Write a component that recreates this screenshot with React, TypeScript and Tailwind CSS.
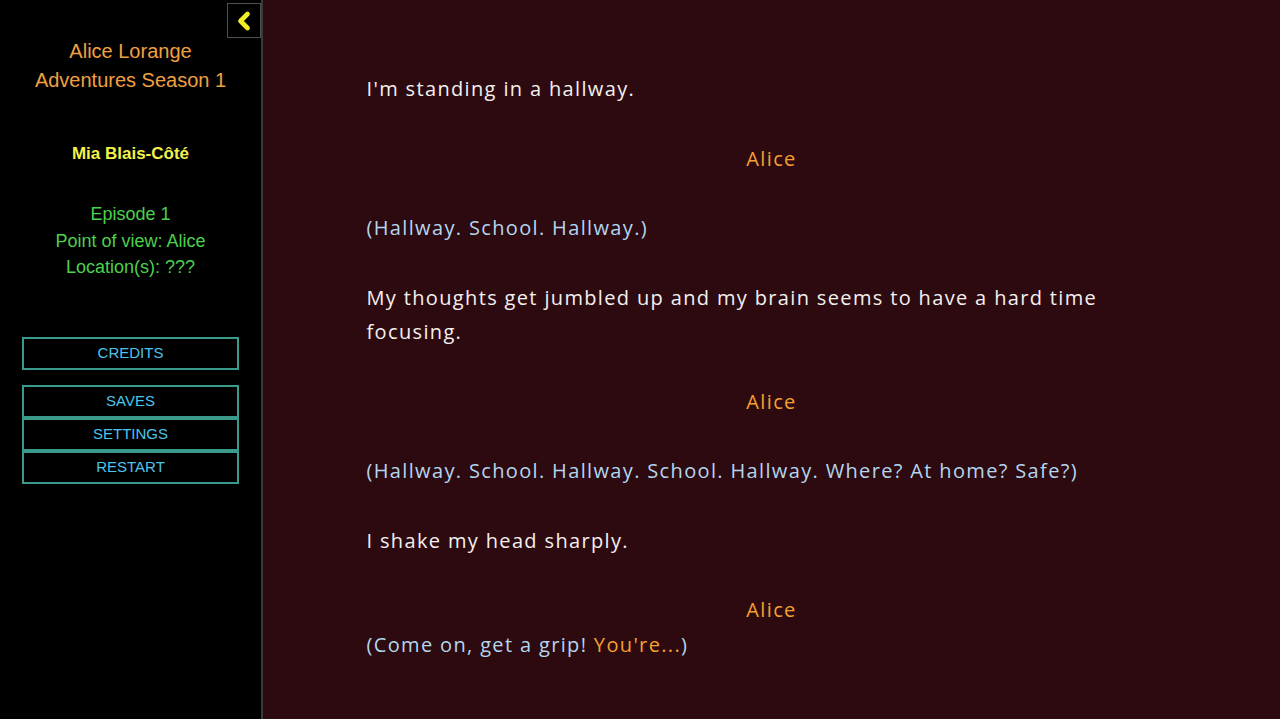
import { ChevronLeft } from 'lucide-react';

type Line =
  | { kind: 'text'; text: string }
  | { kind: 'speaker'; name: string }
  | { kind: 'thought'; parts: { text: string; hl?: boolean }[]; tight?: boolean };

const story: Line[] = [
  { kind: 'text', text: "I'm standing in a hallway." },
  { kind: 'speaker', name: 'Alice' },
  { kind: 'thought', parts: [{ text: '(Hallway. School. Hallway.)' }] },
  {
    kind: 'text',
    text: 'My thoughts get jumbled up and my brain seems to have a hard time focusing.',
  },
  { kind: 'speaker', name: 'Alice' },
  {
    kind: 'thought',
    parts: [{ text: '(Hallway. School. Hallway. School. Hallway. Where? At home? Safe?)' }],
  },
  { kind: 'text', text: 'I shake my head sharply.' },
  { kind: 'speaker', name: 'Alice' },
  {
    kind: 'thought',
    tight: true,
    parts: [{ text: '(Come on, get a grip! ' }, { text: "You're...", hl: true }, { text: ')' }],
  },
];

const menu = ['SAVES', 'SETTINGS', 'RESTART'];

export default function App() {
  return (
    <div className="flex h-[719px] w-full overflow-hidden bg-[#2c0a10]">
      {/* Sidebar */}
      <aside className="relative flex w-[263px] shrink-0 flex-col items-center border-r-2 border-[#3a3a3a] bg-black font-['Liberation_Sans',Arial,sans-serif]">
        <button className="absolute right-0 top-[3px] grid h-[35px] w-[34px] place-items-center border border-[#505050] bg-black">
          <ChevronLeft className="h-7 w-7 text-[#f2ee22]" strokeWidth={4} />
        </button>

        <div className="mt-[37px] text-center text-[20px] leading-[29px] text-[#f0a040]">
          <p>Alice Lorange</p>
          <p>Adventures Season 1</p>
        </div>

        <p className="mt-[49px] text-[17px] font-bold leading-[20px] text-[#f4f14a]">
          Mia Blais-Côté
        </p>

        <div className="mt-[37px] text-center text-[18px] leading-[26.5px] text-[#4cd04c]">
          <p>Episode 1</p>
          <p>Point of view: Alice</p>
          <p>Location(s): ???</p>
        </div>

        <div className="mt-[56px] flex w-[217px] flex-col">
          <button className="h-[33px] border-2 border-[#3a9a8c] text-[15px] text-[#4cc4ec]">
            CREDITS
          </button>
          <div className="mt-[15px] flex flex-col">
            {menu.map((label) => (
              <button
                key={label}
                className="h-[33px] border-2 border-[#3a9a8c] text-[15px] text-[#4cc4ec]"
              >
                {label}
              </button>
            ))}
          </div>
        </div>
      </aside>

      {/* Story */}
      <main className="flex flex-1 justify-center">
        <div className="w-[810px] pt-[72px] font-['Open_Sans',sans-serif] text-[20px] font-medium leading-[34.5px] tracking-[1.35px]">
          {story.map((line, i) => {
            if (line.kind === 'speaker') {
              return (
                <p key={i} className="mb-[35px] text-center text-[#f5a030]">
                  {line.name}
                </p>
              );
            }
            if (line.kind === 'thought') {
              return (
                <p key={i} className={`mb-[35px] text-[#b4d6ee] ${line.tight ? '-mt-[35px]' : ''}`}>
                  {line.parts.map((p, j) => (
                    <span key={j} className={p.hl ? 'text-[#f5a030]' : ''}>
                      {p.text}
                    </span>
                  ))}
                </p>
              );
            }
            return (
              <p key={i} className="mb-[35px] text-[#f4f0ee]">
                {line.text}
              </p>
            );
          })}
        </div>
      </main>
    </div>
  );
}
